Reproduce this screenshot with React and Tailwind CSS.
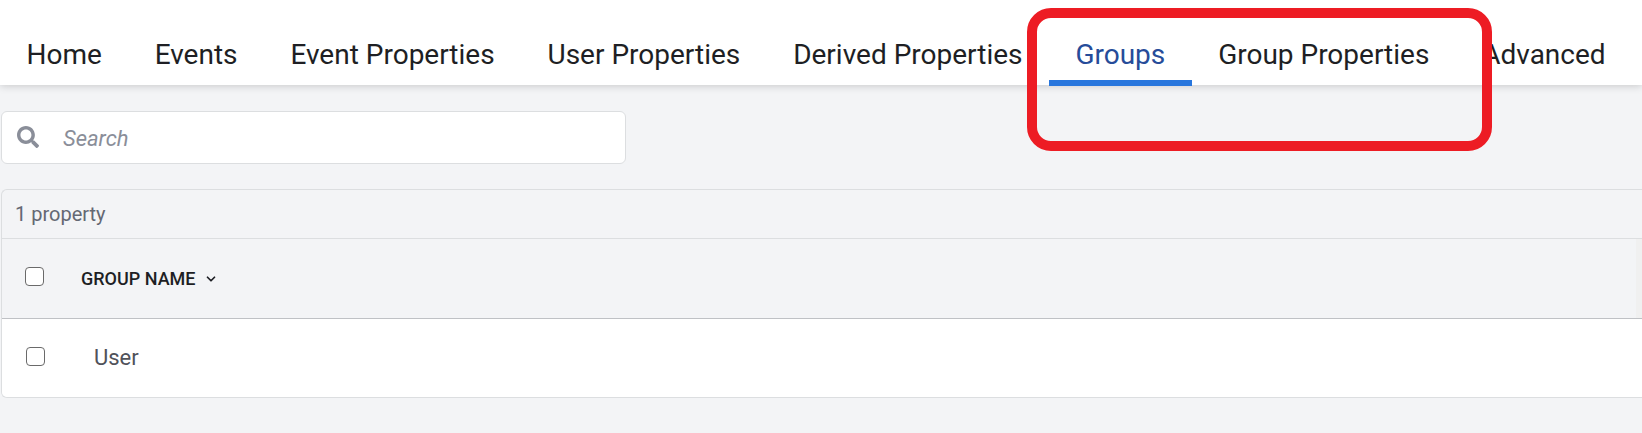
import React from 'react';
import { FaSearch } from 'react-icons/fa';
import { ChevronDown } from 'lucide-react';

const tabs = [
  { label: 'Home' },
  { label: 'Events' },
  { label: 'Event Properties' },
  { label: 'User Properties' },
  { label: 'Derived Properties' },
  { label: 'Groups', active: true },
  { label: 'Group Properties' },
  { label: 'Advanced' },
];

const groups = ['User'];

function Checkbox({ label }) {
  return (
    <input
      type="checkbox"
      aria-label={label}
      className="mb-1 block size-[19px] appearance-none rounded-[4px] border border-[#6a6a6a] bg-white checked:bg-[#2876dd]"
    />
  );
}

function TabBar() {
  return (
    <nav className="relative flex h-[85px] bg-white pr-2.5 shadow-[0_1px_8px_rgba(0,0,0,0.18)]">
      {tabs.map((tab) => (
        <a
          key={tab.label}
          href="#"
          aria-current={tab.active ? 'page' : undefined}
          className={
            tab.active
              ? '-mb-px flex grow items-end justify-center whitespace-nowrap border-b-6 border-[#2876dd] px-6 pb-[5px] text-[28px] leading-10 text-[#264c99]'
              : 'flex grow items-end justify-center whitespace-nowrap px-6 pb-2.5 text-[28px] leading-10 text-[#1e1f24]'
          }
        >
          {tab.label}
        </a>
      ))}
    </nav>
  );
}

function SearchBox() {
  return (
    <label className="flex h-[53px] w-[625px] max-w-full items-center gap-6 rounded-[6px] border border-[#dcdee0] bg-white pr-4 pb-0.5 pl-[15px]">
      <FaSearch className="size-[22px] shrink-0 text-[#8a8e99]" />
      <input
        type="text"
        aria-label="Search"
        placeholder="Search"
        className="min-w-0 flex-1 bg-transparent pt-1 text-[22px] leading-8 text-[#1e1f24] italic outline-none placeholder:text-[#8a8e99]"
      />
    </label>
  );
}

function GroupTable() {
  return (
    <section className="overflow-hidden rounded-l-[6px] border border-r-0 border-[#dcdee0]">
      <div className="flex h-12 items-center pl-[13px] text-[20px] leading-7 text-[#646873]">1 property</div>
      <table className="w-full border-separate border-spacing-0">
        <thead>
          <tr className="h-[81px] text-left">
            <th className="w-[79px] border-t border-b border-t-[#dcdee0] border-b-[#bfc1c5] pl-[23px]">
              <Checkbox label="Select all groups" />
            </th>
            <th className="border-t border-b border-t-[#dcdee0] border-b-[#bfc1c5] text-[18px] leading-6 font-medium text-[#1e1f24]">
              <button type="button" className="flex items-center gap-2">
                GROUP NAME
                <ChevronDown className="size-3.5" strokeWidth={3} />
              </button>
            </th>
            <th className="w-1.5 border-t border-b border-t-[#dcdee0] border-b-[#bfc1c5] bg-[#f0f0f0]" aria-hidden="true"></th>
          </tr>
        </thead>
        <tbody>
          {groups.map((name) => (
            <tr key={name} className="h-[78px] bg-white">
              <td className="pl-6">
                <Checkbox label={`Select ${name}`} />
              </td>
              <td colSpan={2} className="pl-[13px] text-[22px] leading-8 text-[#50525a]">
                {name}
              </td>
            </tr>
          ))}
        </tbody>
      </table>
    </section>
  );
}

export default function App() {
  return (
    <div className="relative min-h-screen overflow-hidden bg-[#f3f4f6] font-['Roboto',sans-serif]">
      <TabBar />
      {/* callout around the group tabs */}
      <div className="pointer-events-none absolute top-2 left-[1027px] h-[143px] w-[465px] rounded-[24px] border-10 border-[#ed1c24]"></div>
      <main className="flex flex-col gap-[25px] pt-[26px] pb-6 pl-px">
        <SearchBox />
        <GroupTable />
      </main>
    </div>
  );
}
